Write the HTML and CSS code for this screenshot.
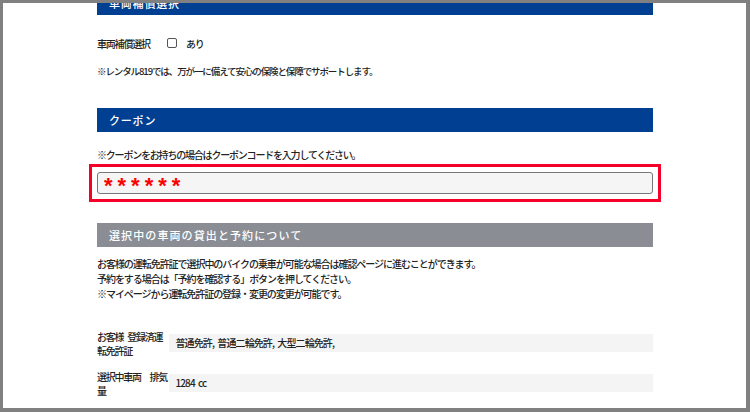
FILE: index.html
```html
<!DOCTYPE html>
<html lang="ja">
<head>
    <meta charset="UTF-8">
    <meta name="viewport" content="width=device-width, initial-scale=1.0">
    <title>予約内容の確認 - レンタル819</title>
    <link rel="stylesheet" href="styles.css">
</head>
<body>
    <div id="frame">
        <div id="reserve-form">
            <h2 class="section-bar">車両補償選択</h2>
            <div class="check-row">
                <span class="check-label">車両補償選択</span>
                <label class="check-option">
                    <input type="checkbox" class="check-box">
                    <span>あり</span>
                </label>
            </div>
            <p class="note note-insurance">※レンタル819では、万が一に備えて安心の保険と保障でサポートします。</p>

            <h2 class="section-bar">クーポン</h2>
            <p class="note note-coupon">※クーポンをお持ちの場合はクーポンコードを入力してください。</p>
            <div class="coupon-box">
                <input type="text" class="coupon-input" value="******">
            </div>

            <h2 class="section-bar section-bar-gray">選択中の車両の貸出と予約について</h2>
            <p class="guide">
                お客様の運転免許証で選択中のバイクの乗車が可能な場合は確認ページに進むことができます。<br>
                予約をする場合は「予約を確認する」ボタンを押してください。<br>
                ※マイページから運転免許証の登録・変更の変更が可能です。
            </p>

            <div class="info-table">
                <div class="info-row">
                    <div class="info-label">お客様 登録済運転免許証</div>
                    <div class="info-value">普通免許, 普通二輪免許, 大型二輪免許,</div>
                </div>
                <div class="info-row">
                    <div class="info-label">選択中車両　排気量</div>
                    <div class="info-value">1284 cc</div>
                </div>
            </div>
        </div>
    </div>
</body>
</html>
```

FILE: styles.css
```css
body {
    margin: 0;
    background: #808080;
    font-family: "Noto Sans CJK JP", "Noto Sans", sans-serif;
    font-weight: 500;
    color: #222;
}
#frame {
    box-sizing: border-box;
    height: 412px;
    border: 3px solid #808080;
    border-right-width: 4px;
    border-bottom-width: 4px;
    background: #fff;
    overflow: hidden;
}
#reserve-form {
    width: 556px;
    margin: -12px 0 0 94px;
}
.section-bar {
    margin: 0;
    height: 24px;
    line-height: 24px;
    padding-left: 12px;
    background: #003f92;
    color: #fff;
    font-size: 11px;
    font-weight: 500;
    letter-spacing: 0.8px;
}
.section-bar + .check-row {
    margin-top: 18px;
}
.section-bar-gray {
    background: #8a8d94;
    margin-top: 21px;
    letter-spacing: 1.1px;
}
.check-row {
    display: flex;
    align-items: center;
    height: 20px;
    font-size: 10px;
    letter-spacing: -1.2px;
}
.check-label {
    width: 70px;
}
.check-option {
    display: flex;
    align-items: center;
    gap: 9px;
}
.check-box {
    appearance: none;
    margin: 0;
    width: 10px;
    height: 10px;
    border: 1px solid #555;
    border-radius: 2px;
    background: #fff;
}
.note {
    margin: 0;
    line-height: 14px;
    font-size: 10px;
}
.note-insurance {
    margin: 11px 0 30px;
    font-size: 9.5px;
    letter-spacing: -1.1px;
}
.note-coupon {
    margin-top: 16px;
    letter-spacing: -1.2px;
}
.coupon-box {
    margin: 2px -8px 0;
    padding: 5px;
    border: 3px solid #f50028;
}
.coupon-input {
    display: block;
    box-sizing: border-box;
    width: 100%;
    height: 22px;
    margin: 0;
    padding: 5px 0 0 6px;
    border: 1px solid #777;
    border-radius: 3px;
    background: #f5f5f5;
    color: #f00;
    font-family: "Liberation Sans", sans-serif;
    font-size: 22px;
    font-weight: bold;
    letter-spacing: 5px;
    line-height: 22px;
}
.guide {
    margin: 9px 0 0;
    font-size: 10px;
    line-height: 15px;
    letter-spacing: -1.05px;
}
.info-table {
    margin-top: 29px;
    display: flex;
    flex-direction: column;
    gap: 12px;
}
.info-row {
    display: flex;
    align-items: flex-start;
}
.info-label {
    width: 71.5px;
    flex-shrink: 0;
    font-size: 10px;
    line-height: 14px;
    letter-spacing: -1.25px;
    word-spacing: 3px;
}
.info-value {
    flex: 1;
    margin-top: 3.5px;
    height: 18px;
    line-height: 18px;
    padding-left: 7px;
    background: #f4f4f4;
    font-size: 10px;
    letter-spacing: -0.9px;
    word-spacing: 2px;
}
```
